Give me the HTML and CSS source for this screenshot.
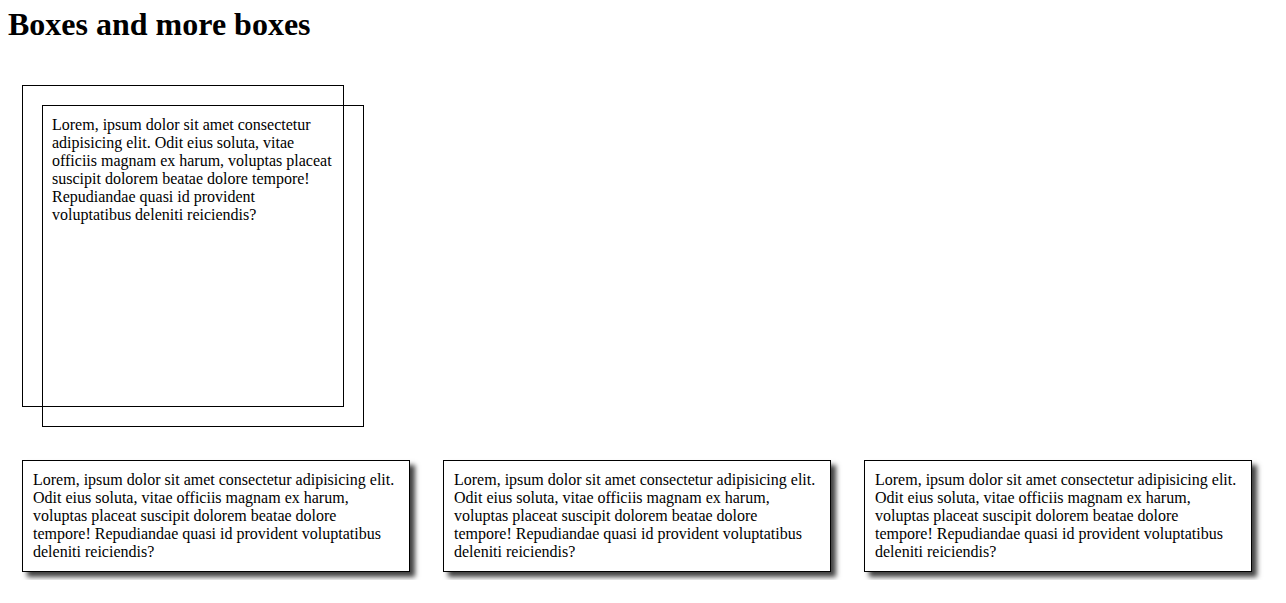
FILE: index.html
```html
<!DOCTYPE html>
<html lang="en">
<head>
<meta charset="utf-8">
<title>Boxes and more boxes</title>
<link rel="stylesheet" href="styles.css">
</head>
<body>
<h1 class="title">Boxes and more boxes</h1>
<main class="page">
  <section class="stack">
    <div class="box square"></div>
    <div class="box square offset">Lorem, ipsum dolor sit amet consectetur adipisicing elit. Odit eius soluta, vitae officiis magnam ex harum, voluptas placeat suscipit dolorem beatae dolore tempore! Repudiandae quasi id provident voluptatibus deleniti reiciendis?</div>
  </section>
  <section class="row">
    <div class="box card">Lorem, ipsum dolor sit amet consectetur adipisicing elit. Odit eius soluta, vitae officiis magnam ex harum, voluptas placeat suscipit dolorem beatae dolore tempore! Repudiandae quasi id provident voluptatibus deleniti reiciendis?</div>
    <div class="box card">Lorem, ipsum dolor sit amet consectetur adipisicing elit. Odit eius soluta, vitae officiis magnam ex harum, voluptas placeat suscipit dolorem beatae dolore tempore! Repudiandae quasi id provident voluptatibus deleniti reiciendis?</div>
    <div class="box card">Lorem, ipsum dolor sit amet consectetur adipisicing elit. Odit eius soluta, vitae officiis magnam ex harum, voluptas placeat suscipit dolorem beatae dolore tempore! Repudiandae quasi id provident voluptatibus deleniti reiciendis?</div>
  </section>
</main>
</body>
</html>
```
FILE: styles.css
```css
html, body {
  background: #fff;
}
body {
  margin: 0;
  padding: 6px 8px 8px 8px;
  font-family: "Liberation Serif", "Times New Roman", serif;
  font-size: 16px;
  color: #000;
}
.title {
  margin: 0;
  font-size: 32px;
  font-weight: bold;
  line-height: 37px;
}
.page {
  padding: 42px 0 0 14px;
}
.stack {
  position: relative;
  width: 322px;
  height: 322px;
}
.box {
  box-sizing: border-box;
  border: 1px solid #000;
  padding: 10px;
  background: transparent;
}
.square {
  width: 322px;
  height: 322px;
}
.offset {
  position: absolute;
  top: 20px;
  left: 20px;
  padding: 10px 26px 10px 9px;
}
.row {
  display: flex;
  gap: 33px;
  margin-top: 53px;
}
.card {
  width: 388px;
  flex: 0 0 388px;
  padding: 10px 14px 10px 10px;
  box-shadow: 5px 5px 5px rgba(0, 0, 0, 0.75);
}
```
